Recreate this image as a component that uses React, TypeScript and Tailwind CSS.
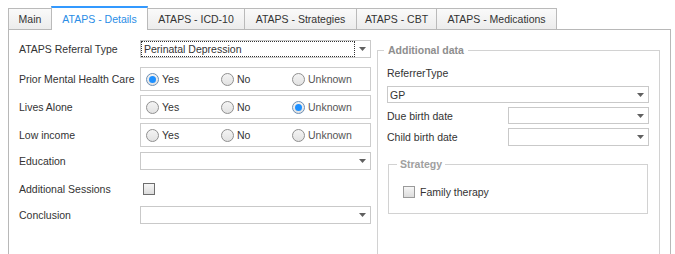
import React from 'react';

const tabs = [
  { label: 'Main', w: 'w-[44px]' },
  { label: 'ATAPS - Details', w: 'w-[97px]', active: true },
  { label: 'ATAPS - ICD-10', w: 'w-[98px]' },
  { label: 'ATAPS - Strategies', w: 'w-[113px]' },
  { label: 'ATAPS - CBT', w: 'w-[81px]' },
  { label: 'ATAPS - Medications', w: 'w-[121px]' },
];

const Arrow = () => (
  <svg width="7" height="4" viewBox="0 0 7 4" className="shrink-0">
    <path d="M0 0h7L3.5 4z" fill="#606060" />
  </svg>
);

const Dropdown = ({ value, focused, className }: { value?: string; focused?: boolean; className: string }) => (
  <div className={`flex items-center border border-[#c9c9c9] bg-white ${className}`}>
    <div className={`flex-1 h-full flex items-center pl-[2px] ${focused ? 'border border-dotted border-[#333]' : ''}`}>
      {value}
    </div>
    <div className="w-[15px] flex justify-center">
      <Arrow />
    </div>
  </div>
);

const Radio = ({ checked }: { checked?: boolean }) => (
  <span className={`w-[13px] h-[13px] rounded-full border flex items-center justify-center bg-gradient-to-b from-[#f4f4f4] to-[#e2e2e2] ${checked ? 'border-[#6d8fb4]' : 'border-[#8f8f8f]'}`}>
    {checked && <span className="w-[7px] h-[7px] rounded-full bg-[#1e90ff]" />}
  </span>
);

const RadioGroup = ({ value }: { value?: string }) => (
  <div className="w-[231px] h-[24px] border border-[#cdcdcd] flex items-center pl-[5px]">
    {['Yes', 'No', 'Unknown'].map((o, i) => (
      <div key={o} className={`flex items-center gap-[3px] ${i === 0 ? 'w-[75px]' : i === 1 ? 'w-[71px]' : ''}`}>
        <Radio checked={value === o} />
        <span className={o === 'Unknown' ? 'text-[#555]' : ''}>{o}</span>
      </div>
    ))}
  </div>
);

const Checkbox = ({ dark }: { dark?: boolean }) => (
  <span className={`w-[12px] h-[12px] border bg-gradient-to-b from-[#f6f6f6] to-[#dcdcdc] ${dark ? 'border-[#6e6e6e]' : 'border-[#9a9a9a]'}`} />
);

const Row = ({ label, className, children }: { label: string; className: string; children: React.ReactNode }) => (
  <div className={`flex items-center ${className}`}>
    <div className="w-[121px] whitespace-nowrap">{label}</div>
    {children}
  </div>
);

export default function App() {
  return (
    <div className="w-[675px] h-[254px] overflow-hidden bg-white text-[10.5px] leading-[14px] text-[#333] font-['Liberation_Sans',Arial,sans-serif]">
      <div className="flex items-end pl-2 pt-[6px]">
        {tabs.map((t, i) =>
          t.active ? (
            <div
              key={t.label}
              className={`${t.w} h-[24px] -ml-px -mb-px relative z-10 bg-white border border-[#bababa] border-b-0 border-t-2 border-t-[#3399ff] flex items-center justify-center text-[#2a8de6]`}
            >
              {t.label}
            </div>
          ) : (
            <div
              key={t.label}
              className={`${t.w} h-[21px] ${i > 0 ? '-ml-px' : ''} bg-gradient-to-b from-[#fafafa] to-[#ececec] border border-[#bababa] border-b-0 flex items-center justify-center`}
            >
              {t.label}
            </div>
          )
        )}
      </div>
      <div className="ml-2 w-[663px] h-[230px] border border-b-0 border-[#b8b8b8] flex">
        <div className="w-[368px] pl-[10px] pt-[10px]">
          <Row label="ATAPS Referral Type" className="h-[18px]">
            <Dropdown value="Perinatal Depression" focused className="w-[231px] h-[18px]" />
          </Row>
          <Row label="Prior Mental Health Care" className="mt-[9px]">
            <RadioGroup value="Yes" />
          </Row>
          <Row label="Lives Alone" className="mt-[4px]">
            <RadioGroup value="Unknown" />
          </Row>
          <Row label="Low income" className="mt-[4px]">
            <RadioGroup />
          </Row>
          <Row label="Education" className="mt-[5px]">
            <Dropdown className="w-[231px] h-[18px]" />
          </Row>
          <Row label="Additional Sessions" className="mt-[10px] h-[18px]">
            <span className="pl-[3px] flex">
              <Checkbox dark />
            </span>
          </Row>
          <Row label="Conclusion" className="mt-[8px]">
            <Dropdown className="w-[231px] h-[18px]" />
          </Row>
        </div>
        <div className="flex-1 pt-[20px]">
          <div className="relative w-[283px] h-[220px] border border-b-0 border-[#d2d2d2] pl-[9px] pr-[10px] pt-[15px]">
            <span className="absolute -top-[8px] left-[6px] bg-white px-[4px] font-bold text-[#8e8e8e]">Additional data</span>
            <div className="h-[14px] flex items-center">ReferrerType</div>
            <Dropdown value="GP" className="mt-[6px] w-full h-[17px]" />
            <div className="mt-[4px] flex items-center justify-between">
              <span>Due birth date</span>
              <Dropdown className="w-[141px] h-[17px]" />
            </div>
            <div className="mt-[4px] flex items-center justify-between">
              <span>Child birth date</span>
              <Dropdown className="w-[141px] h-[18px]" />
            </div>
            <div className="relative mt-[18px] ml-px w-[260px] h-[50px] border border-[#d2d2d2] pl-[14px] pt-[20px]">
              <span className="absolute -top-[8px] left-[8px] bg-white px-[3px] font-bold text-[#a0a0a0]">Strategy</span>
              <div className="flex items-center gap-[5px]">
                <Checkbox />
                <span>Family therapy</span>
              </div>
            </div>
          </div>
        </div>
      </div>
    </div>
  );
}
